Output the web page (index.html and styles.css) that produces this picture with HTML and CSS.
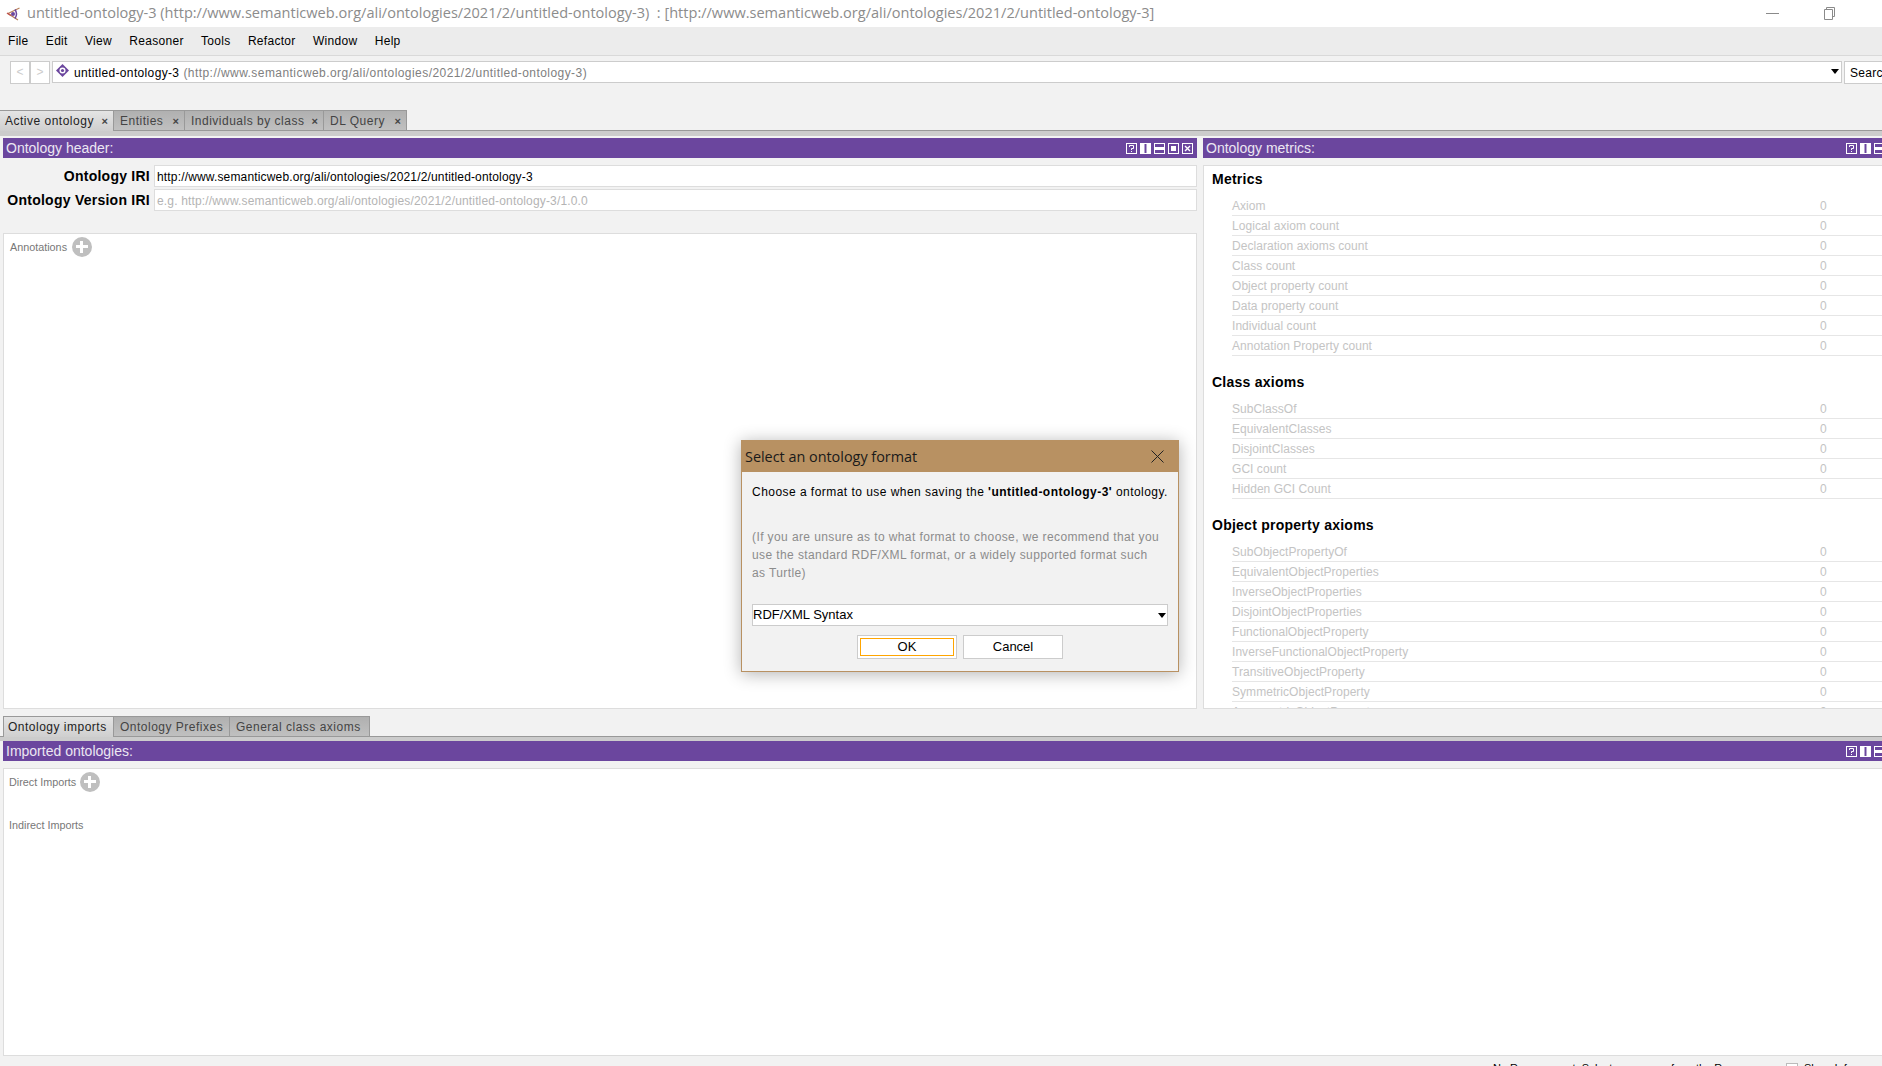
FILE: index.html
```html
<!DOCTYPE html>
<html lang="en">
<head>
    <meta charset="UTF-8">
    <meta name="viewport" content="width=device-width, initial-scale=1.0">
    <title>untitled-ontology-3</title>
    <link rel="stylesheet" href="styles.css">
</head>
<body>
    <header class="titlebar">
        <svg class="app-icon" width="15" height="14" viewBox="0 0 15 14">
            <path d="M13.5 1 L2 6.5 L12 13" fill="none" stroke="#b9805a" stroke-width="1.3"/>
            <path d="M9 2.5 Q12 7 9 11.5" fill="none" stroke="#6b469e" stroke-width="1.5"/>
            <circle cx="7" cy="7" r="2" fill="#6b469e"/>
            <path d="M1 6 L5 8.5" stroke="#c0504d" stroke-width="1.4"/>
        </svg>
        <span class="window-title">untitled-ontology-3 (http://www.semanticweb.org/ali/ontologies/2021/2/untitled-ontology-3)  : [http://www.semanticweb.org/ali/ontologies/2021/2/untitled-ontology-3]</span>
        <svg class="win-min" width="13" height="1" viewBox="0 0 13 1"><rect width="13" height="1" fill="#8a8a8a"/></svg>
        <svg class="win-restore" width="13" height="13" viewBox="0 0 13 13">
            <path d="M3.5 2.5 V0.5 H11.5 V9.5 H9.5 M1.5 2.5 H9.5 V12.5 H1.5 Z" fill="none" stroke="#8a8a8a"/>
        </svg>
    </header>

    <nav class="menubar">
        <a>File</a>
        <a>Edit</a>
        <a>View</a>
        <a>Reasoner</a>
        <a>Tools</a>
        <a>Refactor</a>
        <a>Window</a>
        <a>Help</a>
    </nav>

    <div class="toolbar">
        <div class="nav-buttons">
            <span class="nav-btn">&lt;</span>
            <span class="nav-btn">&gt;</span>
        </div>
        <div class="combo">
            <svg class="diamond" width="13" height="13" viewBox="0 0 13 13">
                <path d="M6.5 0 L13 6.5 L6.5 13 L0 6.5 Z" fill="#6b469e"/>
                <circle cx="6.5" cy="6.5" r="3" fill="#fff"/>
                <circle cx="6.5" cy="6.5" r="1.6" fill="#6b469e"/>
            </svg>
            <span class="combo-name">untitled-ontology-3</span>
            <span class="combo-iri">(http://www.semanticweb.org/ali/ontologies/2021/2/untitled-ontology-3)</span>
            <span class="arrow combo-arrow"></span>
        </div>
        <div class="search">Search for entity</div>
    </div>

    <div class="tabs tabs-main">
        <div class="tab tab-active tab-first">Active ontology<span class="tab-close">×</span></div>
        <div class="tab tab-entities">Entities<span class="tab-close">×</span></div>
        <div class="tab tab-individuals">Individuals by class<span class="tab-close">×</span></div>
        <div class="tab tab-dl">DL Query<span class="tab-close">×</span></div>
    </div>

    <main class="upper">
        <section class="left-col">
            <div class="view-header">
                <span>Ontology header:</span>
                <div class="view-icons">
                    <svg width="11" height="11" viewBox="0 0 11 11"><use href="#i-help"/></svg>
                    <svg width="11" height="11" viewBox="0 0 11 11"><use href="#i-vsplit"/></svg>
                    <svg width="11" height="11" viewBox="0 0 11 11"><use href="#i-hsplit"/></svg>
                    <svg width="11" height="11" viewBox="0 0 11 11"><use href="#i-max"/></svg>
                    <svg width="11" height="11" viewBox="0 0 11 11"><use href="#i-close"/></svg>
                </div>
            </div>
            <div class="iri-row">
                <label>Ontology IRI</label>
                <div class="iri-field">http://www.semanticweb.org/ali/ontologies/2021/2/untitled-ontology-3</div>
            </div>
            <div class="iri-row">
                <label>Ontology Version IRI</label>
                <div class="iri-field iri-hint">e.g. http://www.semanticweb.org/ali/ontologies/2021/2/untitled-ontology-3/1.0.0</div>
            </div>
            <div class="annotations">
                <span class="small-label">Annotations</span>
                <span class="add-btn"></span>
            </div>
        </section>

        <section class="right-col">
            <div class="view-header">
                <span>Ontology metrics:</span>
                <div class="view-icons view-icons-clip">
                    <svg width="11" height="11" viewBox="0 0 11 11"><use href="#i-help"/></svg>
                    <svg width="11" height="11" viewBox="0 0 11 11"><use href="#i-vsplit"/></svg>
                    <svg width="11" height="11" viewBox="0 0 11 11"><use href="#i-hsplit"/></svg>
                </div>
            </div>
            <div class="metrics">
                <h3>Metrics</h3>
                <div class="metric"><span>Axiom</span><span class="num">0</span></div>
                <div class="metric"><span>Logical axiom count</span><span class="num">0</span></div>
                <div class="metric"><span>Declaration axioms count</span><span class="num">0</span></div>
                <div class="metric"><span>Class count</span><span class="num">0</span></div>
                <div class="metric"><span>Object property count</span><span class="num">0</span></div>
                <div class="metric"><span>Data property count</span><span class="num">0</span></div>
                <div class="metric"><span>Individual count</span><span class="num">0</span></div>
                <div class="metric"><span>Annotation Property count</span><span class="num">0</span></div>

                <h3>Class axioms</h3>
                <div class="metric"><span>SubClassOf</span><span class="num">0</span></div>
                <div class="metric"><span>EquivalentClasses</span><span class="num">0</span></div>
                <div class="metric"><span>DisjointClasses</span><span class="num">0</span></div>
                <div class="metric"><span>GCI count</span><span class="num">0</span></div>
                <div class="metric"><span>Hidden GCI Count</span><span class="num">0</span></div>

                <h3>Object property axioms</h3>
                <div class="metric"><span>SubObjectPropertyOf</span><span class="num">0</span></div>
                <div class="metric"><span>EquivalentObjectProperties</span><span class="num">0</span></div>
                <div class="metric"><span>InverseObjectProperties</span><span class="num">0</span></div>
                <div class="metric"><span>DisjointObjectProperties</span><span class="num">0</span></div>
                <div class="metric"><span>FunctionalObjectProperty</span><span class="num">0</span></div>
                <div class="metric"><span>InverseFunctionalObjectProperty</span><span class="num">0</span></div>
                <div class="metric"><span>TransitiveObjectProperty</span><span class="num">0</span></div>
                <div class="metric"><span>SymmetricObjectProperty</span><span class="num">0</span></div>
                <div class="metric"><span>AsymmetricObjectProperty</span><span class="num">0</span></div>
            </div>
        </section>
    </main>

    <div class="tabs tabs-lower">
        <div class="tab tab-active tab-imports">Ontology imports</div>
        <div class="tab tab-prefixes">Ontology Prefixes</div>
        <div class="tab tab-general">General class axioms</div>
    </div>

    <section class="lower">
        <div class="view-header">
            <span>Imported ontologies:</span>
            <div class="view-icons view-icons-clip">
                <svg width="11" height="11" viewBox="0 0 11 11"><use href="#i-help"/></svg>
                <svg width="11" height="11" viewBox="0 0 11 11"><use href="#i-vsplit"/></svg>
                <svg width="11" height="11" viewBox="0 0 11 11"><use href="#i-hsplit"/></svg>
            </div>
        </div>
        <div class="imports">
            <div class="imports-row">
                <span class="small-label">Direct Imports</span>
                <span class="add-btn"></span>
            </div>
            <div class="imports-row imports-indirect">
                <span class="small-label">Indirect Imports</span>
            </div>
        </div>
    </section>

    <footer class="statusbar">
        <span class="status-text">No Reasoner set. Select a reasoner from the Reasoner menu</span>
        <span class="checkbox"></span>
        <span>Show Inferences</span>
    </footer>

    <div class="dialog">
        <div class="dialog-title">
            <span>Select an ontology format</span>
            <svg width="13" height="13" viewBox="0 0 13 13"><path d="M0.5 0.5 L12.5 12.5 M12.5 0.5 L0.5 12.5" stroke="#222" stroke-width="1"/></svg>
        </div>
        <div class="dialog-body">
            <p class="dialog-lead">Choose a format to use when saving the <b>'untitled-ontology-3'</b> ontology.</p>
            <p class="dialog-note">(If you are unsure as to what format to choose, we recommend that you use the standard RDF/XML format, or a widely supported format such<br>as Turtle)</p>
            <div class="format-select">RDF/XML Syntax<span class="arrow"></span></div>
            <div class="dialog-buttons">
                <button class="btn btn-default"><span>OK</span></button>
                <button class="btn"><span>Cancel</span></button>
            </div>
        </div>
    </div>

    <svg class="icon-defs" width="0" height="0">
        <defs>
            <g id="i-help">
                <rect x="0.5" y="0.5" width="10" height="10" fill="none" stroke="#fff"/>
                <path d="M3.5 4 V2.5 H7.5 V5.5 H5.5 V7 M5.5 8 V9" fill="none" stroke="#fff"/>
            </g>
            <g id="i-vsplit">
                <rect x="0.5" y="0.5" width="10" height="10" fill="none" stroke="#fff"/>
                <rect x="1" y="1" width="3.5" height="9" fill="#fff"/>
                <rect x="6.5" y="1" width="3.5" height="9" fill="#fff"/>
            </g>
            <g id="i-hsplit">
                <rect x="0.5" y="0.5" width="10" height="10" fill="none" stroke="#fff"/>
                <rect x="1" y="4" width="9" height="3" fill="#fff"/>
            </g>
            <g id="i-max">
                <rect x="0.5" y="0.5" width="10" height="10" fill="none" stroke="#fff"/>
                <rect x="3" y="3" width="5" height="5" fill="#fff"/>
            </g>
            <g id="i-close">
                <rect x="0.5" y="0.5" width="10" height="10" fill="none" stroke="#fff"/>
                <path d="M3 3 L8 8 M8 3 L3 8" stroke="#fff" stroke-width="1.4"/>
            </g>
        </defs>
    </svg>
</body>
</html>
```

FILE: styles.css
```css
* {
    box-sizing: border-box;
}

html, body {
    margin: 0;
    padding: 0;
}

body {
    position: relative;
    width: 1882px;
    height: 1066px;
    overflow: hidden;
    display: flex;
    flex-direction: column;
    background-color: #f2f2f2;
    font-family: "Liberation Sans", Arial, sans-serif;
    font-size: 12px;
    color: #000;
}

/* window chrome */
.titlebar {
    height: 27px;
    flex: none;
    display: flex;
    align-items: center;
    background-color: #fff;
    padding-left: 6px;
}

.app-icon {
    flex: none;
    margin-right: 6px;
}

.window-title {
    font-family: "Open Sans", sans-serif;
    font-size: 14.55px;
    color: #8c8c8c;
    white-space: pre;
    width: 1739px;
    flex: none;
    padding-bottom: 4px;
}

.win-min {
    flex: none;
}

.win-restore {
    flex: none;
    margin-left: 44px;
}

.menubar {
    height: 29px;
    flex: none;
    display: flex;
    align-items: center;
    background-color: #ececec;
    border-bottom: 1px solid #d9d9d9;
    padding-left: 8px;
}

.menubar a {
    margin-right: 17.3px;
    letter-spacing: 0.3px;
    color: #000;
}

.toolbar {
    height: 54px;
    flex: none;
    display: flex;
    align-items: flex-start;
    padding: 5px 0 0 10px;
}

.nav-buttons {
    display: flex;
    height: 23px;
    margin-right: 2px;
}

.nav-btn {
    width: 20px;
    height: 23px;
    background-color: #fff;
    border: 1px solid #ccc;
    color: #ccc;
    text-align: center;
    line-height: 20px;
}

.combo {
    flex: none;
    width: 1790px;
    height: 22px;
    display: flex;
    align-items: center;
    background-color: #fff;
    border: 1px solid #ccc;
    padding: 1px 0 0 3px;
    position: relative;
}

.diamond {
    margin-right: 5px;
    margin-top: -4px;
}

.combo-name {
    margin-right: 4px;
    letter-spacing: 0.35px;
}

.combo-iri {
    color: #808080;
    letter-spacing: 0.44px;
}

.arrow {
    position: absolute;
    width: 0;
    height: 0;
    border-left: 4px solid transparent;
    border-right: 4px solid transparent;
    border-top: 5px solid #000;
}

.combo-arrow {
    right: 2px;
    top: 7px;
}

.search {
    flex: 1;
    min-width: 0;
    height: 23px;
    margin-left: 2px;
    background-color: #fff;
    border: 1px solid #ccc;
    border-right: none;
    padding: 1px 0 0 5px;
    line-height: 21px;
    letter-spacing: 0.3px;
    white-space: nowrap;
    overflow: hidden;
}

/* tabs */
.tabs {
    flex: none;
    display: flex;
    height: 26px;
    align-items: flex-start;
    border-bottom: 5px solid #ccc;
    position: relative;
}

.tabs::after {
    content: "";
    position: absolute;
    left: 0;
    right: 0;
    top: 20px;
    height: 1px;
    background-color: #999;
}

.tab {
    height: 20px;
    position: relative;
    background: linear-gradient(#b0b0b0, #c0c0c0);
    border: 1px solid #999;
    border-left: none;
    border-bottom: none;
    color: #444;
    letter-spacing: 0.5px;
    line-height: 20px;
    padding-left: 6px;
    white-space: nowrap;
}

.tab-active {
    background: linear-gradient(#e4e4e4, #cfcfcf);
    color: #222;
    z-index: 1;
    height: 21px;
}

.tab-close {
    position: absolute;
    right: 5px;
    top: 0;
    font-size: 11px;
    font-weight: bold;
    letter-spacing: 0;
    color: #444;
}

.tab-first {
    width: 114px;
    padding-left: 5px;
}
.tab-entities { width: 71px; }
.tab-individuals { width: 139px; }
.tab-dl { width: 83px; }

.tabs-lower {
    height: 25px;
    padding-left: 3px;
}

.tab-imports {
    width: 111px;
    border-left: 1px solid #999;
    padding-left: 4px;
}
.tab-prefixes { width: 116px; }
.tab-general { width: 140px; }

/* upper views */
.upper {
    flex: none;
    height: 580px;
    display: flex;
    padding: 2px 0 7px 3px;
}

.left-col {
    width: 1194px;
    flex: none;
    display: flex;
    flex-direction: column;
}

.right-col {
    flex: 1;
    min-width: 0;
    margin-left: 6px;
    display: flex;
    flex-direction: column;
}

.view-header {
    height: 20px;
    flex: none;
    position: relative;
    background-color: #6b469e;
    color: #ebe6f2;
    font-size: 14px;
    line-height: 20px;
    padding-left: 3px;
    overflow: hidden;
}

.view-icons {
    position: absolute;
    top: 5px;
    right: 4px;
    display: flex;
    gap: 3px;
}

.view-icons svg {
    display: block;
}

.view-icons-clip {
    right: -3px;
}

.iri-row {
    display: flex;
    align-items: center;
    height: 22px;
    margin-top: 2px;
}

.iri-row:nth-child(2) {
    margin-top: 7px;
}

.iri-row label {
    width: 147px;
    flex: none;
    text-align: right;
    font-weight: bold;
    font-size: 14px;
    letter-spacing: 0.25px;
}

.iri-field {
    flex: 1;
    height: 22px;
    margin-left: 4px;
    background-color: #fff;
    border: 1px solid #ddd;
    padding: 1px 0 0 2px;
    line-height: 20px;
    letter-spacing: 0.16px;
}

.iri-hint {
    color: #b4b4b4;
}

.annotations {
    flex: 1;
    margin-top: 22px;
    display: flex;
    align-items: flex-start;
    background-color: #fff;
    border: 1px solid #ddd;
    padding: 3px 0 0 6px;
}

.annotations .add-btn {
    margin-left: 5px;
}

.small-label {
    font-size: 10.8px;
    color: #777;
    line-height: 20px;
}

.add-btn {
    width: 20px;
    height: 20px;
    margin-left: 4px;
    border-radius: 50%;
    position: relative;
    background-color: #bfbfbf;
}

.add-btn::before {
    content: "";
    position: absolute;
    left: 4px;
    top: 8px;
    width: 12px;
    height: 3px;
    background-color: #fff;
}

.add-btn::after {
    content: "";
    position: absolute;
    left: 8px;
    top: 4px;
    width: 3px;
    height: 12px;
    background-color: #fff;
}

.metrics {
    height: 544px;
    margin-top: 7px;
    background-color: #fff;
    border: 1px solid #ddd;
    border-right: none;
    overflow: hidden;
    padding-left: 8px;
}

.metrics h3 {
    margin: 0;
    font-size: 14px;
    font-weight: bold;
    letter-spacing: 0.25px;
    line-height: 16px;
    padding-top: 5px;
    height: 30px;
}

.metrics h3 ~ h3 {
    height: 37px;
    padding-top: 12px;
    margin-top: 6px;
}

.metric {
    display: flex;
    height: 20px;
    margin-left: 20px;
    border-bottom: 1px solid #e6e6e6;
    color: #c4c4c4;
    line-height: 20px;
    letter-spacing: 0.05px;
}

.metric span:first-child {
    width: 588px;
    flex: none;
}

/* lower view */
.lower {
    flex: none;
    height: 315px;
    padding: 0 0 0 3px;
}

.imports {
    height: 288px;
    margin-top: 7px;
    background-color: #fff;
    border: 1px solid #ddd;
    border-right: none;
    padding: 3px 0 0 5px;
}

.imports-row {
    display: flex;
    align-items: flex-start;
}

.imports-indirect {
    margin-top: 23px;
}

.statusbar {
    flex: none;
    height: 20px;
    display: flex;
    align-items: flex-start;
    padding-top: 6px;
    font-size: 11px;
    white-space: nowrap;
}

.status-text {
    margin-left: 1493px;
    width: 293px;
}

.checkbox {
    flex: none;
    width: 12px;
    height: 12px;
    background-color: #fff;
    border: 1px solid #bbb;
    margin-right: 6px;
    margin-top: 1px;
}

/* dialog */
.dialog {
    position: absolute;
    left: 741px;
    top: 440px;
    width: 438px;
    height: 232px;
    background-color: #f2f2f2;
    border: 1px solid #b89162;
    box-shadow: 0 2px 16px rgba(0, 0, 0, 0.3);
}

.dialog-title {
    height: 31px;
    display: flex;
    align-items: center;
    justify-content: space-between;
    background-color: #b89162;
    font-family: "Open Sans", sans-serif;
    font-size: 14.4px;
    color: #1a1a1a;
    padding: 0 14px 1px 3px;
}

.dialog-body {
    padding: 0 10px;
}

.dialog-lead {
    margin: 11px 0 0;
    line-height: 18px;
    letter-spacing: 0.46px;
    white-space: nowrap;
}

.dialog-note {
    margin: 27px 0 0;
    line-height: 18px;
    letter-spacing: 0.4px;
    color: #8c8c8c;
}

.format-select {
    position: relative;
    height: 22px;
    margin-top: 22px;
    background-color: #fff;
    border: 1px solid #ccc;
    font-size: 13px;
    line-height: 20px;
}

.format-select .arrow {
    right: 1px;
    top: 8px;
}

.dialog-buttons {
    display: flex;
    justify-content: center;
    gap: 6px;
    margin-top: 9px;
}

.btn {
    width: 100px;
    height: 24px;
    padding: 2px;
    background-color: #fff;
    border: 1px solid #ccc;
    font-family: "Liberation Sans", Arial, sans-serif;
    font-size: 13px;
    color: #000;
}

.btn span {
    display: block;
    height: 18px;
    line-height: 16px;
    border: 1px solid transparent;
}

.btn-default span {
    border-color: #ffa500;
}

.icon-defs {
    position: absolute;
}
```
